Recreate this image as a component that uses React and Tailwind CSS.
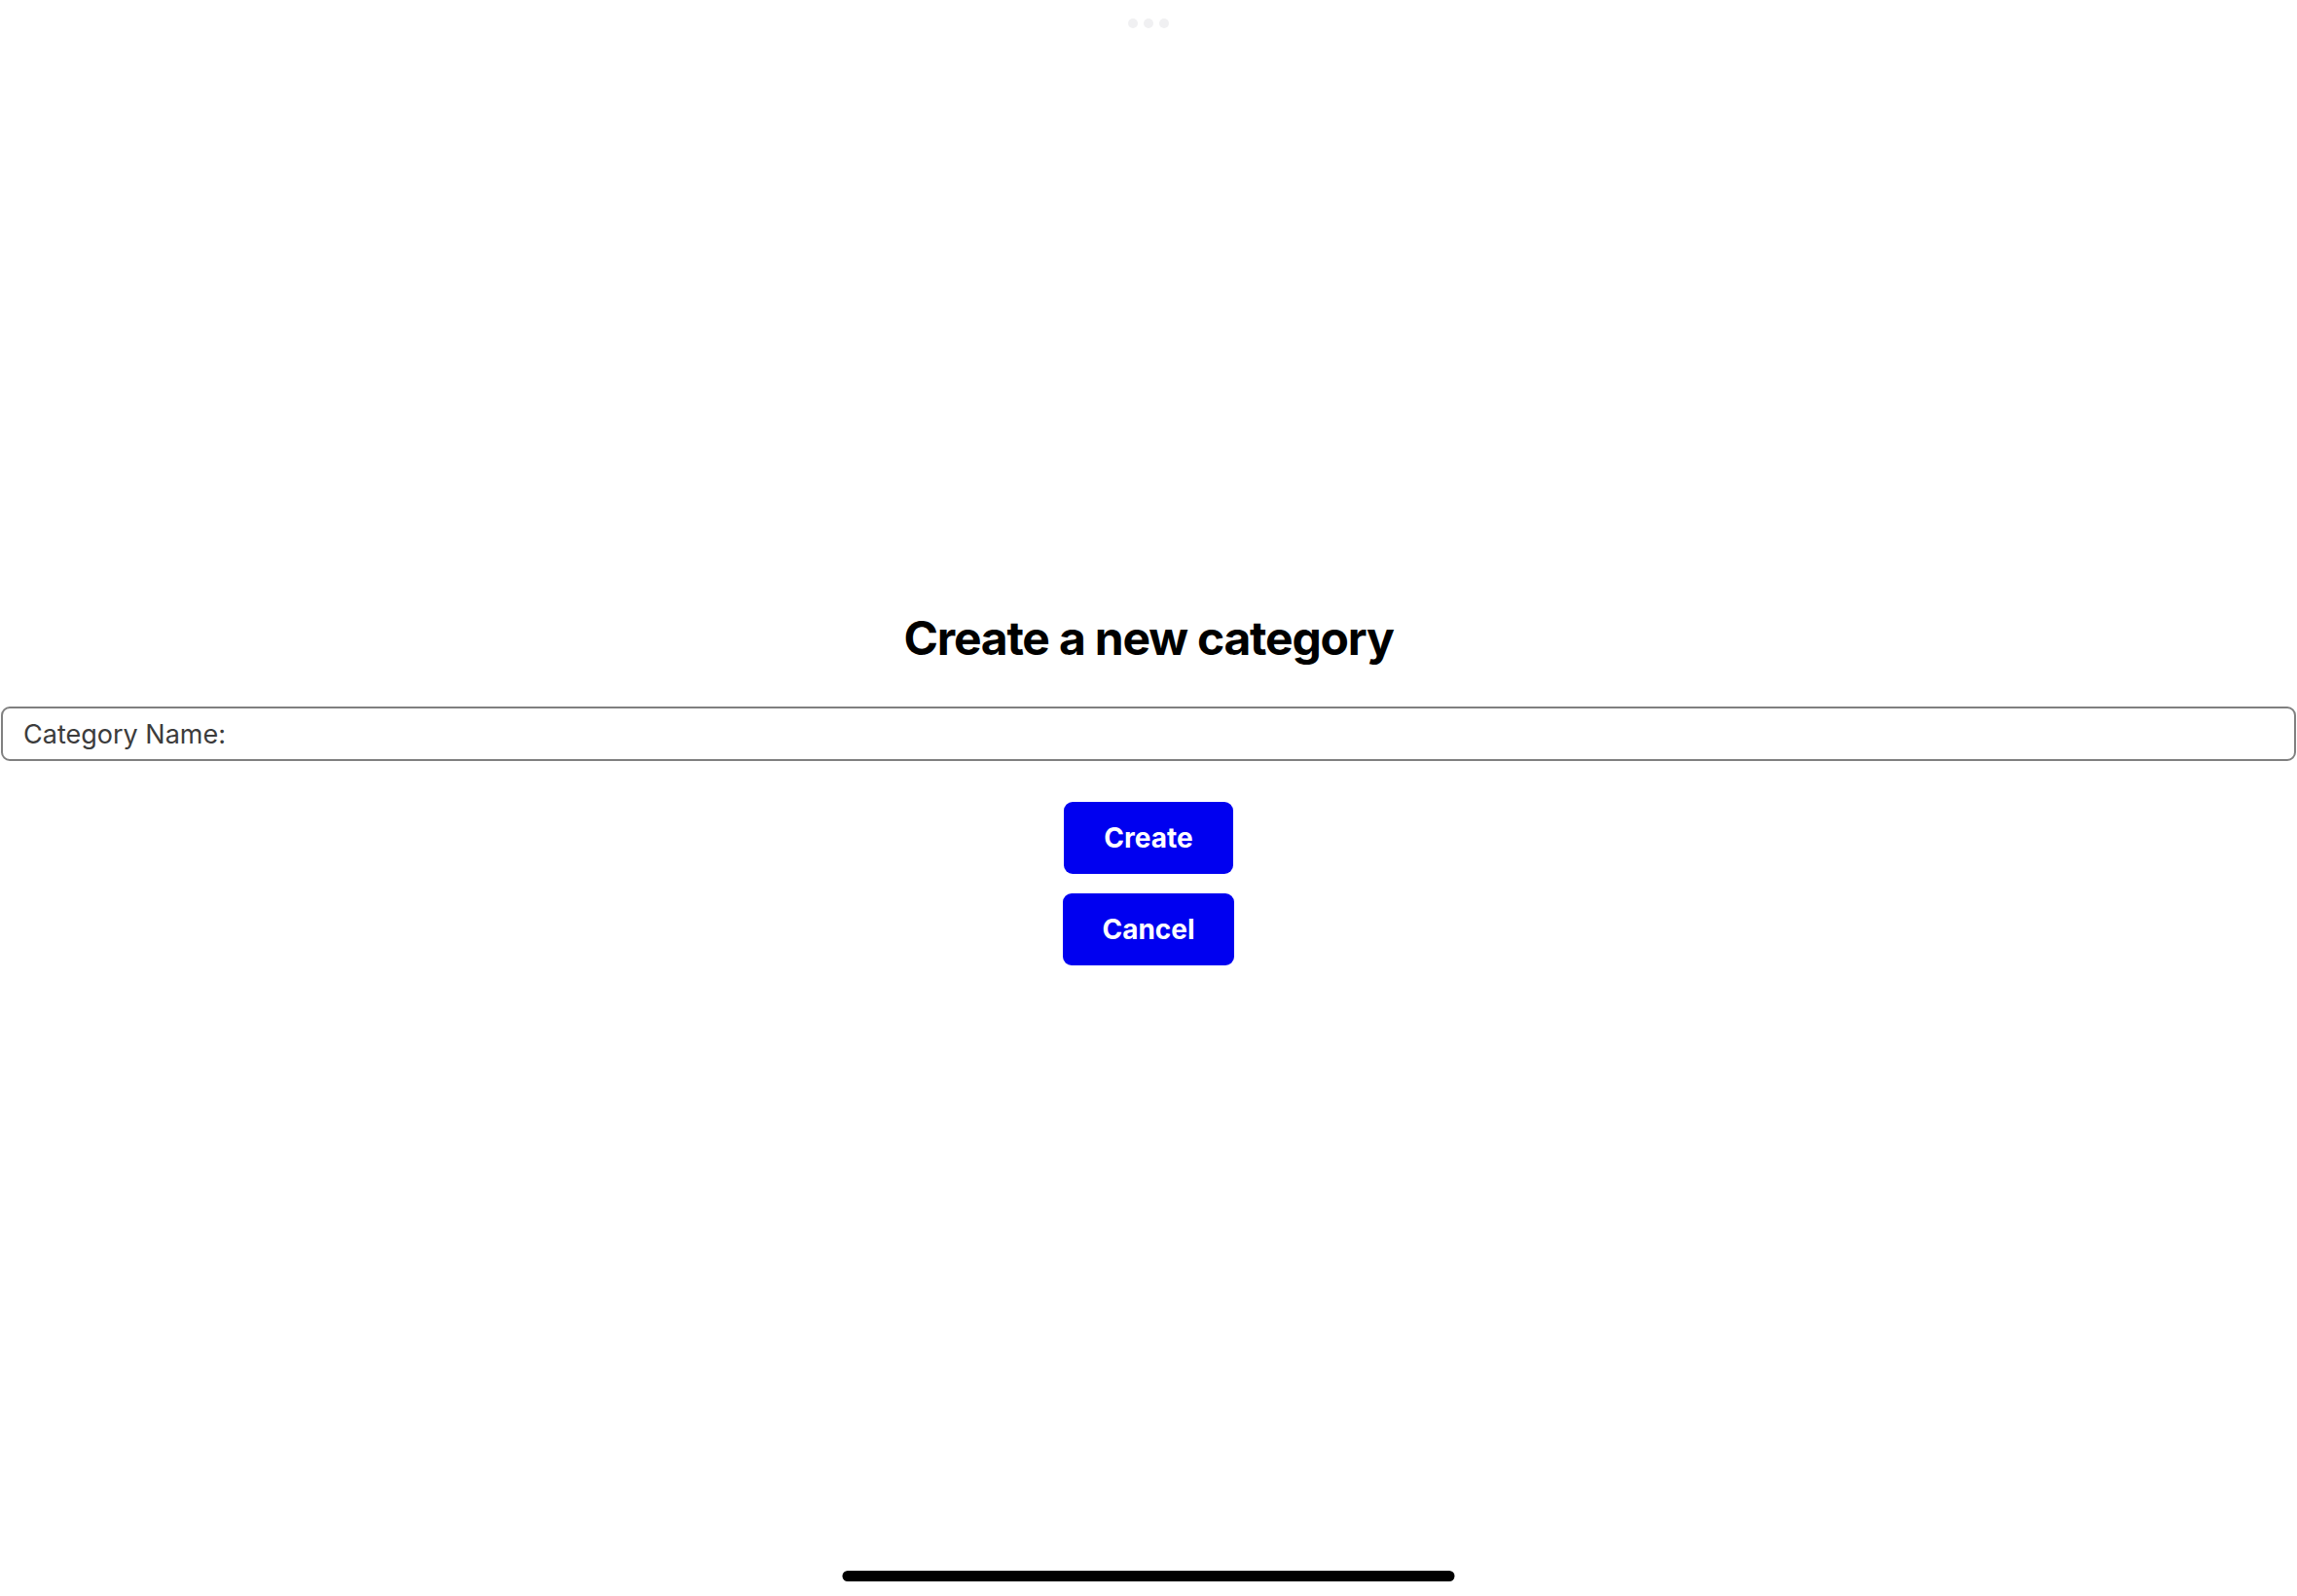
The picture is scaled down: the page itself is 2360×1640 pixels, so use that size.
export default function App() {
  return (
    <div
      className="relative w-full h-[1640px] bg-white overflow-hidden"
      style={{ fontFamily: "Inter, 'Noto Sans', sans-serif" }}
    >
      {/* top multitasking dots */}
      <div className="absolute top-[19px] left-1/2 -translate-x-1/2 flex gap-[6px]">
        <span className="w-[10px] h-[10px] rounded-full bg-[#f0f0f2]"></span>
        <span className="w-[10px] h-[10px] rounded-full bg-[#f0f0f2]"></span>
        <span className="w-[10px] h-[10px] rounded-full bg-[#f0f0f2]"></span>
      </div>

      <div className="flex flex-col items-center pt-[628px]">
        <h1 className="text-[48px] leading-[56px] font-bold text-black tracking-[-1.2px]">
          Create a new category
        </h1>

        <div className="self-stretch mx-[1px] mt-[42px]">
          <input
            type="text"
            placeholder="Category Name:"
            className="w-full h-[56px] border-2 border-[#808080] rounded-[9px] px-[21px] text-[27px] text-[#3c3c3c] placeholder:text-[#3c3c3c] outline-none"
          />
        </div>

        <button className="mt-[42px] w-[174px] h-[74px] rounded-[9px] bg-[#0000f0] text-white text-[28px] font-bold">
          Create
        </button>
        <button className="mt-[20px] w-[176px] h-[74px] rounded-[9px] bg-[#0000f0] text-white text-[28px] font-bold">
          Cancel
        </button>
      </div>

      {/* home indicator */}
      <div className="absolute bottom-[15px] left-1/2 -translate-x-1/2 w-[629px] h-[11px] rounded-full bg-black"></div>
    </div>
  );
}
